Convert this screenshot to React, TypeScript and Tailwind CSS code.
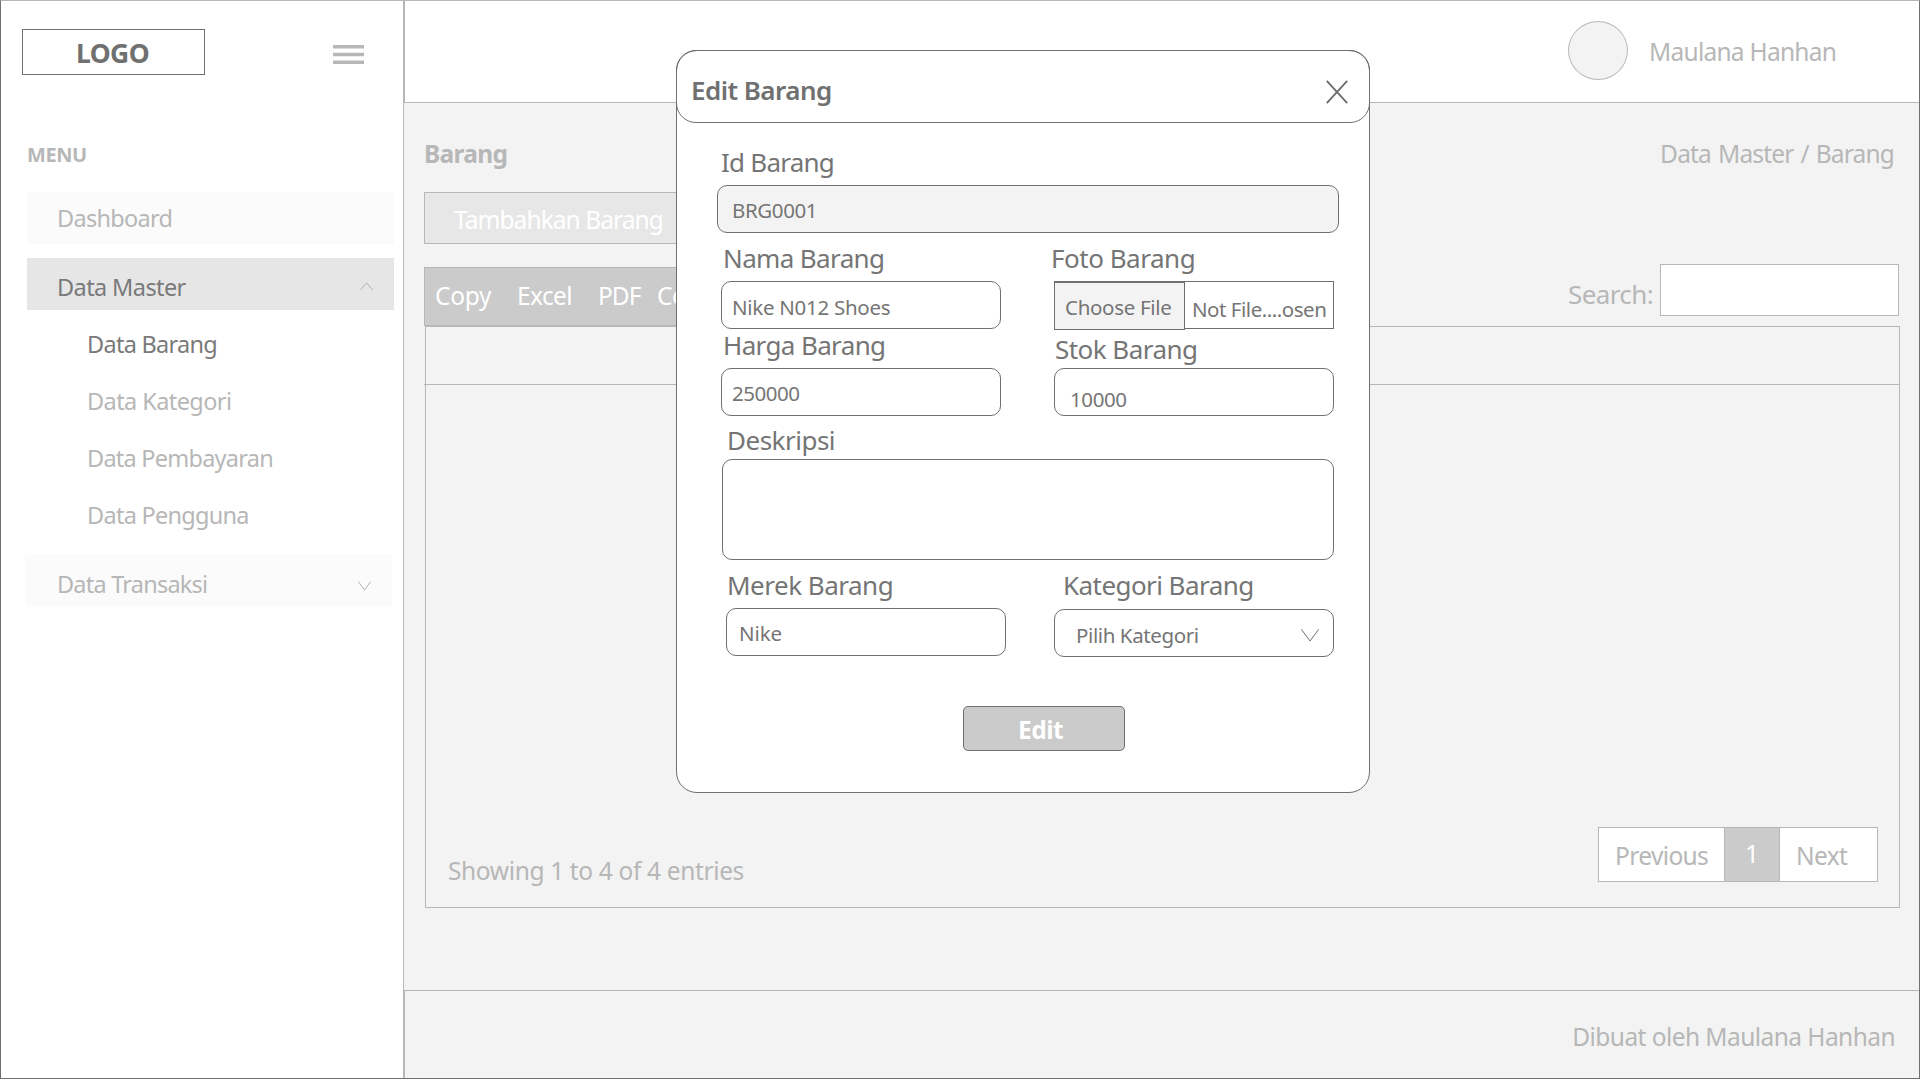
import type { ReactNode } from "react";

function Label({ className, children }: { className: string; children: ReactNode }) {
  return <div className={`h-8 whitespace-nowrap text-[26px] leading-8 ${className}`}>{children}</div>;
}

function Box({ className, children }: { className: string; children?: ReactNode }) {
  return (
    <div
      className={`flex items-start whitespace-nowrap rounded-[10px] border border-[#707070] text-[20.5px] leading-8 ${className}`}
    >
      {children}
    </div>
  );
}

function Sidebar() {
  return (
    <aside className="flex w-[403px] shrink-0 flex-col border-r border-[#b7b7b7] bg-white pt-7 text-[23.5px] leading-8 text-[#b7b7b7]">
      <div className="flex items-start pl-[21px]">
        <div className="h-[46px] w-[183px] border border-[#707070] pl-[53px] pt-[7px] text-[26.5px] font-bold tracking-[-0.6px] text-[#707070]">
          LOGO
        </div>
        <svg className="ml-32 mt-4" width="31" height="20" viewBox="0 0 31 20" stroke="#b7b7b7" strokeWidth="3.4">
          <path d="M0 1.8H31M0 9.5H31M0 17.2H31" />
        </svg>
      </div>
      <div className="mt-16 h-8 pl-[26px] text-[20px] font-bold tracking-[-0.4px]">MENU</div>
      <nav className="mt-[21px] flex flex-col">
        <div className="ml-[26px] h-[52px] w-[367px] bg-[#fbfbfb] pl-[30px] pt-2.5 tracking-[-0.72px]">Dashboard</div>
        <div className="ml-[26px] mt-3.5 flex h-[52px] w-[367px] justify-between bg-[#e6e6e6] pl-[30px] pr-[21px] pt-[13px] tracking-[-0.6px] text-[#7a7a7a]">
          Data Master
          <svg className="mt-[11px]" width="13" height="9" viewBox="0 0 13 9" fill="none" stroke="#b0b0b0">
            <path d="M.3 8.2 6.5.8 12.7 8.2" />
          </svg>
        </div>
        <div className="mt-[18px] flex flex-col gap-[25px] pl-[86px]">
          <div className="tracking-[-0.72px] text-[#7a7a7a]">Data Barang</div>
          <div className="tracking-[-0.58px]">Data Kategori</div>
          <div className="tracking-[-0.76px]">Data Pembayaran</div>
          <div className="tracking-[-0.73px]">Data Pengguna</div>
        </div>
        <div className="ml-6 mt-6 flex h-[52px] w-[367px] justify-between bg-[#fbfbfb] pl-8 pr-[21px] pt-[13px] tracking-[-0.78px]">
          Data Transaksi
          <svg className="mt-[13px]" width="13" height="10" viewBox="0 0 13 10" fill="none" stroke="#b0b0b0">
            <path d="M.3.5 6.5 9 12.7.5" />
          </svg>
        </div>
      </nav>
    </aside>
  );
}

function Content() {
  return (
    <main className="flex h-[887px] flex-col pl-5 pr-[19px]">
      <div className="mt-[35px] flex h-8 justify-between pr-1.5">
        <h1 className="font-bold tracking-[-0.7px]">Barang</h1>
        <div className="tracking-[-0.84px] [word-spacing:1.5px]">Data Master / Barang</div>
      </div>
      <div className="mt-[22px] h-[52px] w-[270px] border border-[#b7b7b7] bg-[#e7e7e7] pl-[29px] pt-[11px] tracking-[-0.94px] text-white">
        Tambahkan Barang
      </div>
      <div className="mt-5 flex h-[62px] items-start justify-between">
        <div className="mt-[3px] flex h-[59px] w-[400px] border border-[#b7b7b7] bg-[#cbcbcb] pl-2.5 pt-3 text-white">
          <div className="w-[82px] tracking-[-0.3px]">Copy</div>
          <div className="w-[81px] tracking-[-0.6px]">Excel</div>
          <div className="w-[59px] tracking-[-1px]">PDF</div>
          <div className="tracking-[-0.6px]">Column</div>
        </div>
        <div className="flex pr-px">
          <div className="mt-3.5 w-[92px] text-[26px] tracking-[-0.6px]">Search:</div>
          <div className="h-[52px] w-[239px] border border-[#b7b7b7] bg-white" />
        </div>
      </div>
      <div className="ml-px flex h-[582px] flex-col justify-between border border-[#b7b7b7]">
        <div className="-ml-0.5 h-[58px] border-b border-[#b7b7b7]" />
        <div className="flex h-20 items-start justify-between pl-[22px] pr-[21px]">
          <div className="mt-7 tracking-[-0.36px]">Showing 1 to 4 of 4 entries</div>
          <div className="flex h-[55px] w-[280px] border border-[#b7b7b7] bg-white">
            <div className="w-[125px] pl-4 pt-3 tracking-[-0.63px]">Previous</div>
            <div className="w-14 border-x border-[#b7b7b7] bg-[#cbcbcb] pl-5 pt-2.5 text-white">1</div>
            <div className="pl-4 pt-3 tracking-[-0.63px]">Next</div>
          </div>
        </div>
      </div>
    </main>
  );
}

function EditModal() {
  return (
    <div
      role="dialog"
      className="h-[743px] w-[694px] rounded-[21px] border border-[#707070] bg-white text-[#757575]"
    >
      <header className="-mx-px -mt-px flex h-[73px] items-start justify-between rounded-[20px] border border-[#707070] pl-3.5 pr-[21px] pt-[23px]">
        <h2 className="whitespace-nowrap text-[26px] font-semibold leading-8 tracking-[-0.54px] text-[#707070]">
          Edit Barang
        </h2>
        <svg className="mt-1.5" width="22" height="24" viewBox="0 0 22 24" stroke="#707070" strokeWidth="2">
          <path d="M.8.8 21.2 23.2M21.2.8.8 23.2" />
        </svg>
      </header>
      <div className="pl-10 pt-[23px]">
        <Label className="pl-1 tracking-[-0.76px]">Id Barang</Label>
        <Box className="mt-[7px] h-12 w-[622px] bg-[#f3f3f3] pl-3.5 pt-2 tracking-[-0.4px]">BRG0001</Box>

        <div className="mt-[9px] flex h-[87px]">
          <div className="w-[337px] pl-1">
            <Label className="pl-0.5 tracking-[-0.63px]">Nama Barang</Label>
            <Box className="mt-[7px] h-12 w-[280px] pl-2.5 pt-[9px] tracking-[-0.28px]">Nike N012 Shoes</Box>
          </div>
          <div>
            <Label className="-ml-[3px] tracking-[-0.48px]">Foto Barang</Label>
            <div className="mt-[7px] flex h-12 w-[280px] items-start whitespace-nowrap border border-[#707070] text-[20.5px] leading-8">
              <div className="-ml-px h-12 w-[131px] border border-[#707070] bg-[#f3f3f3] pl-2.5 pt-2 tracking-[-0.32px]">
                Choose File
              </div>
              <div className="pl-[7px] pt-[11px] tracking-[-0.47px]">Not File....osen</div>
            </div>
          </div>
        </div>

        <div className="flex h-[87px]">
          <div className="w-[337px] pl-1">
            <Label className="pl-0.5 tracking-[-0.63px]">Harga Barang</Label>
            <Box className="mt-[7px] h-12 w-[280px] pl-2.5 pt-2 tracking-[-0.48px]">250000</Box>
          </div>
          <div className="pt-1">
            <Label className="pl-px tracking-[-0.54px]">Stok Barang</Label>
            <Box className="mt-[3px] h-12 w-[280px] pl-[15px] pt-3.5 tracking-[-0.4px]">10000</Box>
          </div>
        </div>

        <Label className="mt-2 pl-2.5 tracking-[-0.5px]">Deskripsi</Label>
        <Box className="ml-[5px] mt-[3px] h-[101px] w-[612px]" />

        <div className="mt-[9px] flex h-[88px]">
          <div className="w-[337px] pl-[9px]">
            <Label className="pl-px tracking-[-0.5px]">Merek Barang</Label>
            <Box className="mt-[7px] h-12 w-[280px] pl-3 pt-2 tracking-[-0.1px]">Nike</Box>
          </div>
          <div>
            <Label className="pl-[9px] tracking-[-0.56px]">Kategori Barang</Label>
            <Box className="mt-2 h-12 w-[280px] justify-between pl-[21px] pr-3.5 pt-[9px] tracking-[-0.4px]">
              Pilih Kategori
              <svg className="mt-2.5" width="18" height="13" viewBox="0 0 18 13" fill="none" stroke="#707070">
                <path d="M.4.4 9 12 17.6.4" />
              </svg>
            </Box>
          </div>
        </div>

        <button className="ml-[246px] mt-[49px] flex h-[45px] w-[162px] items-start rounded-[5px] border border-[#707070] bg-[#cbcbcb] pl-[54px] pt-[7px] text-[24.5px] font-bold leading-8 tracking-[-0.5px] text-white">
          Edit
        </button>
      </div>
    </div>
  );
}

export default function App() {
  return (
    <div className="relative flex h-[1079px] w-[1920px] overflow-hidden border border-[#707070] border-t-[#b7b7b7] bg-[#f3f3f3] font-['Noto_Sans',sans-serif]">
      <Sidebar />
      <div className="flex grow flex-col whitespace-nowrap text-[24.5px] leading-8 text-[#b7b7b7]">
        <header className="flex h-[102px] items-start border-b border-l border-[#b7b7b7] bg-white pl-[1163px]">
          <div className="mt-5 h-[59px] w-[60px] rounded-[50%] border border-[#b7b7b7] bg-[#f3f3f3]" />
          <div className="ml-[21px] mt-[35px] tracking-[-0.74px]">Maulana Hanhan</div>
        </header>
        <Content />
        <footer className="flex h-[88px] justify-end border-l border-t border-[#b7b7b7] pr-6 pt-[30px] tracking-[-0.56px]">
          Dibuat oleh Maulana Hanhan
        </footer>
      </div>
      <div className="absolute left-[675px] top-[49px]">
        <EditModal />
      </div>
    </div>
  );
}
